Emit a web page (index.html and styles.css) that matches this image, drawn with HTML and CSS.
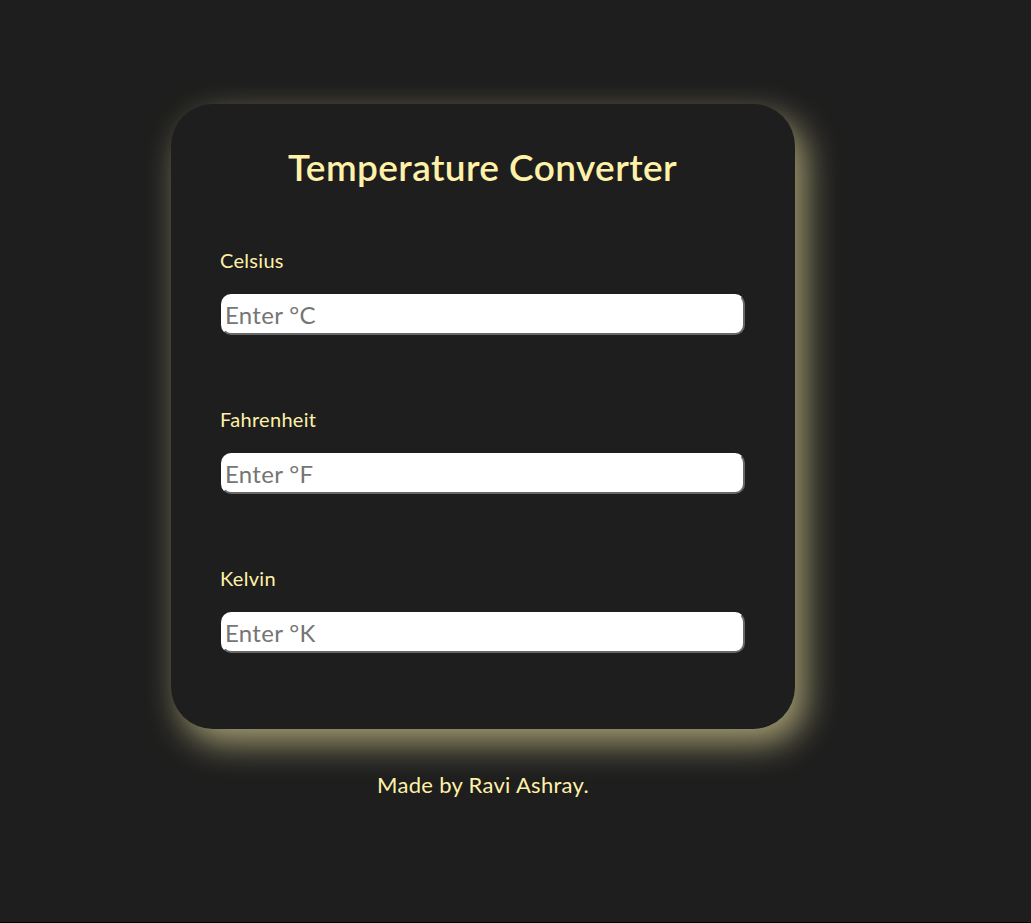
FILE: index.html
```html
<!DOCTYPE html>
<html lang="en">
<head>
<meta charset="utf-8">
<title>Temperature Converter</title>
<link rel="stylesheet" href="styles.css">
</head>
<body>
<main class="page">
  <section class="card">
    <h1 class="title">Temperature Converter</h1>
    <div class="field">
      <label class="label" for="c">Celsius</label>
      <input class="input" id="c" type="number" placeholder="Enter °C">
    </div>
    <div class="field">
      <label class="label" for="f">Fahrenheit</label>
      <input class="input" id="f" type="number" placeholder="Enter °F">
    </div>
    <div class="field">
      <label class="label" for="k">Kelvin</label>
      <input class="input" id="k" type="number" placeholder="Enter °K">
    </div>
  </section>
  <p class="footer">Made by Ravi Ashray.</p>
</main>
</body>
</html>
```

FILE: styles.css
```css
html {
  background: #000;
}
body {
  margin: 0;
  height: 922px;
  background: #1e1e1e;
  font-family: "Lato", "Noto Sans", sans-serif;
  color: #fff1a8;
}
.page {
  display: flex;
  flex-direction: column;
  align-items: center;
  padding: 104px 65px 0 0;
}
.card {
  width: 624px;
  height: 625px;
  box-sizing: border-box;
  padding: 41px 50px 0 49px;
  background: #1e1e1e;
  border-radius: 42px;
  box-shadow: 10px 14px 34px rgba(255, 244, 170, 0.6);
  display: flex;
  flex-direction: column;
}
.title {
  margin: 0 0 58px;
  text-align: center;
  font-size: 37px;
  font-weight: 600;
  letter-spacing: 0.4px;
  line-height: 44px;
}
.field {
  display: flex;
  flex-direction: column;
  gap: 22px;
  margin-bottom: 71px;
}
.field:last-child {
  margin-bottom: 0;
}
.label {
  font-size: 20px;
  letter-spacing: 0.3px;
  line-height: 24px;
  margin-top: 1px;
}
.input {
  width: 524px;
  height: 41px;
  box-sizing: border-box;
  margin-left: 1px;
  padding: 0 2px;
  border: 2px solid;
  border-color: #fff #686868 #686868 #fff;
  border-radius: 10px;
  background: #fff;
  font-family: inherit;
  font-size: 24px;
  letter-spacing: 0.3px;
  color: #333;
  outline: none;
}
.input::placeholder {
  color: #757575;
}
.input::-webkit-outer-spin-button,
.input::-webkit-inner-spin-button {
  -webkit-appearance: none;
  margin: 0;
}
.footer {
  margin: 43px 0 0;
  font-size: 22px;
  letter-spacing: 0.3px;
  line-height: 26px;
}
```
